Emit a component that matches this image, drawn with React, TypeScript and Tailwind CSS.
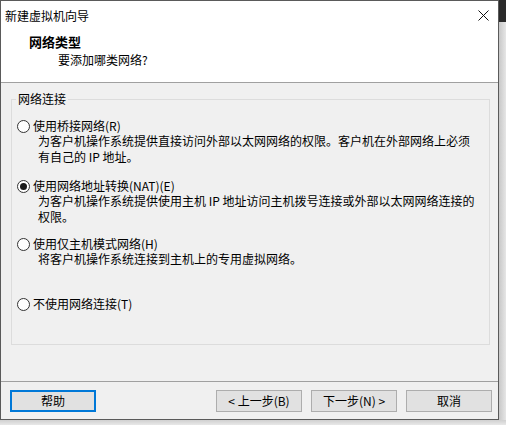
import React from "react";

const FONT = { fontFamily: '"Noto Sans CJK SC", "Noto Sans", sans-serif' };

function Radio({ checked }: { checked?: boolean }) {
  return (
    <span className="w-[13px] h-[13px] rounded-full border border-[#333333] bg-white flex items-center justify-center shrink-0">
      {checked && <span className="w-[7px] h-[7px] rounded-full bg-[#1a1a1a]" />}
    </span>
  );
}

function Option({
  label,
  lines,
  checked,
  className,
}: {
  label: string;
  lines: string[];
  checked?: boolean;
  className?: string;
}) {
  return (
    <div className={"flex flex-col " + (className || "")}>
      <div className="flex items-center h-[14px] gap-[3px]">
        <Radio checked={checked} />
        <span className="text-[12px] leading-[14px] whitespace-nowrap">{label}</span>
      </div>
      {lines.map((l, i) => (
        <div key={i} className="pl-[21px] text-[12px] leading-[16px] h-[16px] whitespace-nowrap">
          {l}
        </div>
      ))}
    </div>
  );
}

function Btn({ children, primary }: { children: React.ReactNode; primary?: boolean }) {
  return (
    <div
      className={
        "w-[86px] h-[22px] flex items-center justify-center text-[12px] bg-[#e1e1e1] " +
        (primary ? "border-2 border-[#0078d7]" : "border border-[#adadad]")
      }
    >
      {children}
    </div>
  );
}

export default function App() {
  return (
    <div className="w-[506px] h-[425px] flex flex-col bg-[#e4e4e4] text-black overflow-hidden" style={FONT}>
      <div className="flex h-[420px]">
        <div className="w-[499px] h-[420px] border border-[#5a5a5a] flex flex-col bg-[#f0f0f0]">
          {/* title bar */}
          <div className="h-[27px] bg-white flex items-center pl-[4px] pr-[9px] justify-between">
            <span className="text-[12px] leading-[14px] pt-[2px]">新建虚拟机向导</span>
            <svg width="11" height="11" viewBox="0 0 11 11" className="mt-[1px]">
              <path d="M0.5 0.5 L10.5 10.5 M10.5 0.5 L0.5 10.5" stroke="#111" strokeWidth="1" />
            </svg>
          </div>
          {/* header */}
          <div className="h-[55px] bg-white border-b border-[#a0a0a0] flex flex-col pt-[6px]">
            <div className="pl-[28px] text-[13px] font-bold leading-[16px] h-[16px]">网络类型</div>
            <div className="pl-[57px] text-[12px] leading-[16px] h-[16px] mt-[2px]">要添加哪类网络?</div>
          </div>
          {/* body */}
          <div className="h-[298px] bg-[#f0f0f0] pt-[16px] pl-[10px]">
            <div className="relative w-[479px] h-[246px] border border-[#dcdcdc] pl-[5px] pt-[19px]">
              <span className="absolute -top-[9px] left-[4px] bg-[#f0f0f0] px-[2px] text-[12px] leading-[16px]">
                网络连接
              </span>
              <Option
                label="使用桥接网络(R)"
                lines={[
                  "为客户机操作系统提供直接访问外部以太网网络的权限。客户机在外部网络上必须",
                  "有自己的 IP 地址。",
                ]}
              />
              <Option
                className="mt-[14px]"
                checked
                label="使用网络地址转换(NAT)(E)"
                lines={[
                  "为客户机操作系统提供使用主机 IP 地址访问主机拨号连接或外部以太网网络连接的",
                  "权限。",
                ]}
              />
              <Option
                className="mt-[12px]"
                label="使用仅主机模式网络(H)"
                lines={["将客户机操作系统连接到主机上的专用虚拟网络。"]}
              />
              <Option className="mt-[30px]" label="不使用网络连接(T)" lines={[]} />
            </div>
          </div>
          {/* footer */}
          <div className="flex-1 border-t border-[#a0a0a0] bg-[#f0f0f0] flex items-start pt-[8px] pl-[9px] pr-[6px]">
            <Btn primary>帮助</Btn>
            <div className="ml-auto flex gap-[9px]">
              <Btn>&lt; 上一步(B)</Btn>
              <Btn>下一步(N) &gt;</Btn>
              <Btn>取消</Btn>
            </div>
          </div>
        </div>
        <div className="w-[7px] flex flex-col">
          <div className="h-[22px] bg-[#2a2a2a]" />
          <div className="flex-1 bg-gradient-to-r from-[#c8c8c8] to-[#e6e6e6]" />
        </div>
      </div>
      <div className="flex-1 bg-gradient-to-b from-[#d0d0d0] to-[#e8e8e8]" />
    </div>
  );
}
